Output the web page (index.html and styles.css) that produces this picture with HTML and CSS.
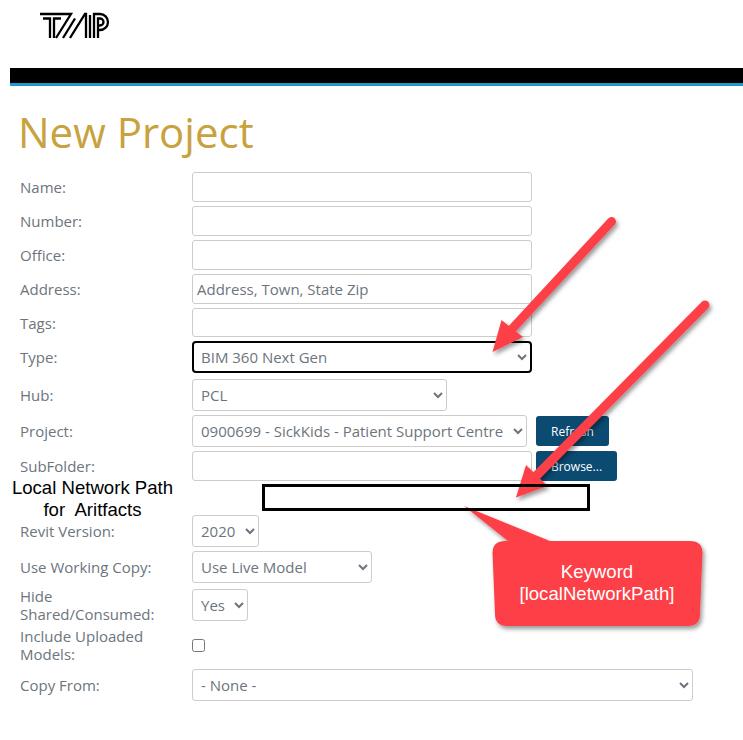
FILE: index.html
```html
<!DOCTYPE html>
<html lang="en">
<head>
<meta charset="utf-8">
<title>New Project</title>
<link rel="stylesheet" href="styles.css">
</head>
<body>
<header class="site-header">
  <svg class="logo" width="70" height="28" viewBox="0 0 70 28" fill="none" stroke="#000" stroke-width="2.300" aria-label="TMP">
    <path d="M0 2H31L16 26"/>
    <path d="M3 6.500H10V26"/>
    <path d="M14 26V6.500H21"/>
    <path d="M23 26L35 6.500"/>
    <path d="M30 26L45 2H46V26"/>
    <path d="M50 26V3"/>
    <path d="M54 26V2H60A8 8 0 0 1 60 18H58"/>
    <path d="M58 26V6.500H60A3.500 3.500 0 0 1 60 13.500H58"/>
  </svg>
  <div class="bar"></div>
</header>
<main class="page">
  <h1 class="title">New Project</h1>
  <form class="form">
    <div class="row"><label class="label">Name:</label><input class="field w-full" type="text"></div>
    <div class="row"><label class="label">Number:</label><input class="field w-full" type="text"></div>
    <div class="row"><label class="label">Office:</label><input class="field w-full" type="text"></div>
    <div class="row"><label class="label">Address:</label><input class="field w-full" type="text" placeholder="Address, Town, State Zip"></div>
    <div class="row"><label class="label">Tags:</label><input class="field w-full short" type="text"></div>
    <div class="row"><label class="label">Type:</label><select class="sel w-full focus"><option>BIM 360 Next Gen</option></select></div>
    <div class="row wide"><label class="label">Hub:</label><select class="sel w-hub"><option>PCL</option></select></div>
    <div class="row"><label class="label">Project:</label><select class="sel w-project"><option>0900699 - SickKids - Patient Support Centre</option></select><button class="btn w-refresh" type="button">Refresh</button></div>
    <div class="row"><label class="label">SubFolder:</label><input class="field w-full" type="text"><button class="btn w-browse" type="button">Browse...</button></div>
    <div class="spacer"></div>
    <div class="row"><label class="label">Revit Version:</label><select class="sel w-year"><option>2020</option></select></div>
    <div class="row"><label class="label">Use Working Copy:</label><select class="sel w-copy"><option>Use Live Model</option></select></div>
    <div class="row wide fixed"><label class="label">Hide Shared/Consumed:</label><select class="sel w-yes"><option>Yes</option></select></div>
    <div class="row wide tall"><label class="label">Include Uploaded Models:</label><input class="check" type="checkbox"></div>
    <div class="row wide"><label class="label">Copy From:</label><select class="sel w-from"><option>- None -</option></select></div>
  </form>
</main>

<svg class="annot" width="743" height="740" viewBox="0 0 743 740">
  <defs>
    <filter id="shadow" x="-20%" y="-20%" width="140%" height="140%">
      <feDropShadow dx="2" dy="3" stdDeviation="2" flood-color="#000" flood-opacity="0.4"/>
    </filter>
  </defs>
  <g fill="#fd4146" stroke="none" filter="url(#shadow)">
    <path d="M611.500 221.500L512 329" stroke="#fd4146" stroke-width="9" stroke-linecap="round"/>
    <path d="M492.500 352L501.500 320L523 337Z"/>
  </g>
  <g fill="#fd4146" stroke="none" filter="url(#shadow)">
    <path d="M705 305L536 476" stroke="#fd4146" stroke-width="9" stroke-linecap="round"/>
    <path d="M516 497.500L526 465L547.500 486Z"/>
  </g>
  <path class="callout" filter="url(#shadow)" d="M464 506L508 541H690Q702.500 541 702.500 553L700 614Q700 626 688 626H507Q495 626 495 614L492.500 553Q492.500 541 505 541H508L550 541Z"/>
</svg>
<div class="box"></div>
<div class="note">Local Network Path<br>for&nbsp; Aritfacts</div>
<div class="keyword">Keyword<br>[localNetworkPath]</div>
</body>
</html>
```
FILE: styles.css
```css
html, body {
  margin: 0;
  padding: 0;
  background: #fff;
  height: 740px;
  overflow: hidden;
}
body {
  position: relative;
  font-family: "Open Sans", sans-serif;
  font-size: 15px;
  color: #6c757d;
}
.site-header {
  display: flex;
  flex-direction: column;
  padding: 12px 0 0 10px;
}
.logo {
  display: block;
  margin-left: 30px;
  height: 28px;
}
.bar {
  margin-top: 28px;
  height: 15px;
  background: #000;
  border-bottom: 3px solid #1b9ad2;
}
.page {
  padding: 0 0 0 20px;
}
.title {
  margin: 22px 0 0 -2px;
  font-size: 42px;
  line-height: 48px;
  font-weight: 400;
  color: #c8a23e;
}
.form {
  display: flex;
  flex-direction: column;
  gap: 4px;
  margin-top: 16px;
}
.row {
  display: flex;
  align-items: center;
}
.wide { margin-top: 2px; }
.fixed { height: 32px; }
.tall { height: 36px; }
.spacer { height: 26px; }
.label {
  flex: none;
  width: 152px;
  padding-right: 20px;
  line-height: 18px;
}
.field, .sel {
  box-sizing: border-box;
  font: inherit;
  color: inherit;
  background: #fff;
  border: 1px solid #ccc;
  border-radius: 3px;
  outline: none;
}
.field {
  height: 30px;
  padding: 0 4px;
}
.field::placeholder { color: #6c757d; opacity: 1; }
.short { height: 29px; }
.sel {
  height: 32px;
  padding: 0 4px;
}
.focus {
  border: 2px solid #000;
  border-radius: 4px;
  padding: 0 3px;
}
.w-full { width: 340px; }
.w-hub { width: 255px; }
.w-project { width: 335px; }
.w-year { width: 67px; }
.w-copy { width: 180px; }
.w-yes { width: 56px; }
.w-from { width: 501px; }
.btn {
  box-sizing: border-box;
  height: 30px;
  margin-left: 4px;
  padding: 0;
  border: none;
  border-radius: 3px;
  background: #0b4a71;
  color: #fff;
  font: inherit;
  font-size: 12px;
}
.w-refresh { width: 73px; margin-left: 9px; }
.w-browse { width: 81px; }
.check {
  width: 13px;
  height: 13px;
  margin: 0;
}
.annot {
  position: absolute;
  left: 0;
  top: 0;
  pointer-events: none;
}
.callout { fill: #fd4146; }
.box {
  position: absolute;
  left: 262px;
  top: 484px;
  width: 322px;
  height: 21px;
  border: 3px solid #000;
}
.note {
  position: absolute;
  left: 2px;
  top: 477px;
  width: 181px;
  font-family: "Liberation Sans", Arial, sans-serif;
  font-size: 18.6px;
  line-height: 22px;
  color: #000;
  text-align: center;
  white-space: nowrap;
}
.keyword {
  position: absolute;
  left: 497px;
  top: 561px;
  width: 200px;
  font-family: "Liberation Sans", Arial, sans-serif;
  font-size: 18.6px;
  line-height: 22px;
  color: #fff;
  text-align: center;
}
```
